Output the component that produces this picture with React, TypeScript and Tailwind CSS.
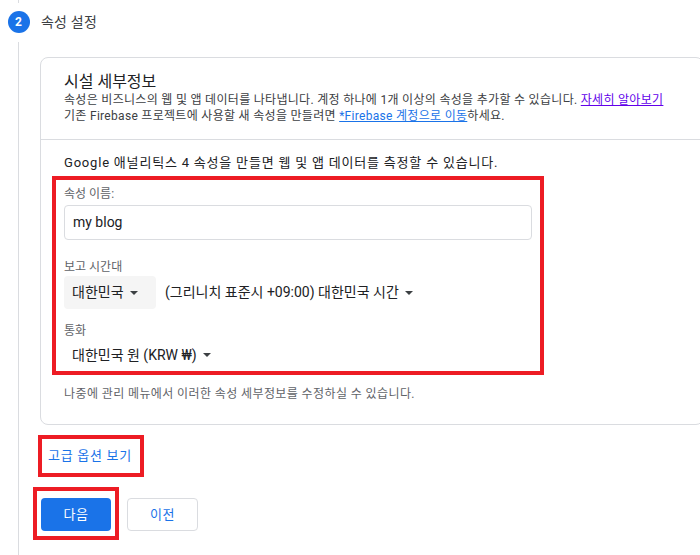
import React from "react";

const Caret = () => (
  <svg width="8" height="4" viewBox="0 0 8 4" className="ml-[6px] inline-block" aria-hidden>
    <path d="M0 0 L8 0 L4 4 Z" fill="#3c4043" />
  </svg>
);

export default function App() {
  return (
    <div
      className="w-[700px] h-[555px] overflow-hidden bg-white flex"
      style={{ fontFamily: "Roboto, 'Noto Sans CJK KR', sans-serif" }}
    >
      {/* stepper rail */}
      <div className="w-[37px] shrink-0 flex flex-col items-center">
        <div className="w-px h-[3px] bg-[#dadce0]" />
        <div className="mt-[8px] w-[22px] h-[22px] rounded-full bg-[#1a73e8] text-white text-[12px] font-bold flex items-center justify-center">
          2
        </div>
        <div className="mt-[9px] w-px flex-1 bg-[#dadce0]" />
      </div>

      {/* content */}
      <div className="ml-[3px] flex flex-col w-[664px] shrink-0">
        <div className="h-[44px] flex items-center pl-px text-[14px] tracking-[0.2px] text-[#3c4043]">속성 설정</div>

        {/* card */}
        <div className="mt-[13px] border border-[#dadce0] rounded-[8px] flex flex-col">
          <div className="pl-[23px] pt-[14px] pb-[15px]">
            <div className="text-[16px] leading-[20px] text-[#202124]">시설 세부정보</div>
            <div className="text-[12px] tracking-[0.3px] leading-[16px] text-[#3c4043] whitespace-nowrap">
              속성은 비즈니스의 웹 및 앱 데이터를 나타냅니다. 계정 하나에 1개 이상의 속성을 추가할 수 있습니다.{" "}
              <span className="text-[#6200ea] underline">자세히 알아보기</span>
            </div>
            <div className="text-[12px] tracking-[0.3px] leading-[16px] text-[#3c4043] whitespace-nowrap">
              기존 Firebase 프로젝트에 사용할 새 속성을 만들려면{" "}
              <span className="text-[#1a73e8] underline">*Firebase 계정으로 이동</span>하세요.
            </div>
          </div>
          <div className="h-px bg-[#dadce0]" />
          <div className="pt-[13px] pb-[22px] flex flex-col">
            <div className="pl-[23px] text-[13px] tracking-[0.8px] leading-[20px] text-[#202124] whitespace-nowrap">
              Google 애널리틱스 4 속성을 만들면 웹 및 앱 데이터를 측정할 수 있습니다.
            </div>
            <div className="mt-[3px] ml-[11px] w-[492px] border-[4px] border-[#ed1c24] pl-[8px] pr-[8px] pt-[6px] flex flex-col">
              <div className="text-[12px] leading-[16px] text-[#5f6368]">속성 이름:</div>
              <div className="mt-[3px] h-[35px] border border-[#dadce0] rounded-[4px] flex items-center pl-[8px] text-[14px] text-[#202124]">
                my blog
              </div>
              <div className="mt-[19px] text-[12px] leading-[16px] text-[#5f6368]">보고 시간대</div>
              <div className="mt-[1px] flex items-center">
                <div className="h-[33px] w-[92px] bg-[#f5f5f5] rounded-[4px] flex items-center pl-[8px] text-[14px] text-[#202124]">
                  대한민국
                  <Caret />
                </div>
                <div className="ml-[9px] flex items-center text-[14px] text-[#202124]">
                  (그리니치 표준시 +09:00) 대한민국 시간
                  <Caret />
                </div>
              </div>
              <div className="mt-[14px] text-[12px] leading-[16px] text-[#5f6368]">통화</div>
              <div className="h-[32px] flex items-center pl-[8px] text-[14px] text-[#202124]">
                대한민국 원 (KRW ₩)
                <Caret />
              </div>
            </div>
            <div className="mt-[11px] pl-[23px] text-[12px] tracking-[0.4px] leading-[16px] text-[#5f6368] whitespace-nowrap">
              나중에 관리 메뉴에서 이러한 속성 세부정보를 수정하실 수 있습니다.
            </div>
          </div>
        </div>

        {/* advanced options */}
        <div className="mt-[10px] ml-[-2px] w-[106px] h-[42px] border-[4px] border-[#ed1c24] flex items-center pl-[6px] text-[13px] tracking-[0.7px] text-[#1a73e8] whitespace-nowrap">
          고급 옵션 보기
        </div>

        {/* buttons */}
        <div className="mt-[10px] flex items-start">
          <div className="ml-[-7px] border-[4px] border-[#ed1c24] pl-[4px] pr-[4px] pt-[7px] pb-[5px]">
            <div className="w-[70px] h-[33px] rounded-[4px] bg-[#1a73e8] text-white text-[13px] tracking-[0.5px] flex items-center justify-center">
              다음
            </div>
          </div>
          <div className="ml-[8px] mt-[11px] w-[71px] h-[33px] rounded-[4px] border border-[#dadce0] bg-white text-[#1a73e8] text-[13px] tracking-[0.5px] flex items-center justify-center">
            이전
          </div>
        </div>
      </div>
    </div>
  );
}
